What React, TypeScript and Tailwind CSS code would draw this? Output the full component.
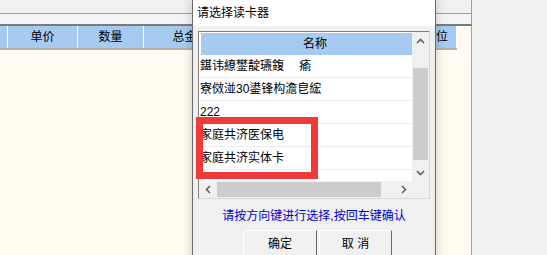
export default function App() {
  const up = (
    <svg width="9" height="6" viewBox="0 0 9 6"><polyline points="1,5 4.5,1.5 8,5" fill="none" stroke="#606060" strokeWidth="1.6" /></svg>
  );
  const down = (
    <svg width="9" height="6" viewBox="0 0 9 6"><polyline points="1,1 4.5,4.5 8,1" fill="none" stroke="#606060" strokeWidth="1.6" /></svg>
  );
  const left = (
    <svg width="6" height="9" viewBox="0 0 6 9"><polyline points="5,1 1.5,4.5 5,8" fill="none" stroke="#606060" strokeWidth="1.6" /></svg>
  );
  const right = (
    <svg width="6" height="9" viewBox="0 0 6 9"><polyline points="1,1 4.5,4.5 1,8" fill="none" stroke="#606060" strokeWidth="1.6" /></svg>
  );
  const rows = ["鍖讳繚鐢靛瓙鍑　 瘉", "寮傚湴30鍙锋构澹皀綋", "222", "家庭共济医保电", "家庭共济实体卡"];
  return (
    <div className="relative w-[547px] h-[255px] overflow-hidden bg-[#f0f0f0] text-[12px] text-black font-['Liberation_Sans','Noto_Sans_CJK_SC',sans-serif]">
      {/* background grid window */}
      <div className="w-[472px] h-full flex flex-col">
        <div className="h-[14px] border-b border-r border-[#a0a0a0] bg-[#f0f0f0]" />
        <div className="h-[10px] border-r border-[#a0a0a0] bg-[#f4f4f4]" />
        <div className="flex-1 flex flex-col border-t-2 border-t-[#7a7a7a] border-r border-r-[#a0a0a0] bg-[#fffbf0]">
          <div className="flex w-[457px] h-[24px] border-b-2 border-[#b0b0b0] bg-[#a6caf0] leading-[22px]">
            <div className="w-[8px] border-r border-white" />
            <div className="w-[70px] border-r border-white text-center">单价</div>
            <div className="w-[66px] border-r border-white text-center">数量</div>
            <div className="w-[94px] border-r border-white text-center">总金额</div>
            <div className="flex-1 border-r border-white" />
            <div className="w-[60px] border-r border-white text-right pr-[8px]">单位</div>
          </div>
        </div>
      </div>

      {/* dialog */}
      <div className="absolute left-[192px] top-0 w-[244px] h-[280px] flex flex-col border-x border-[#6b6b6b] bg-[#f0f0f0] shadow-[0_0_10px_rgba(0,0,0,0.2)]">
        <div className="h-[26px] bg-white pl-[4px] pt-[6px] leading-[14px]">请选择读卡器</div>
        <div className="mt-[5px] ml-[5px] w-[232px] h-[168px] flex border border-t-[#828282] border-l-[#828282] border-r-[#d8d8d8] border-b-[#d8d8d8] bg-white">
          <div className="flex-1 flex flex-col min-w-0">
            <div className="flex-1 overflow-hidden">
              <div className="h-[23px] pt-[1px] pl-[2px]">
                <div className="w-[228px] h-[22px] bg-[#a6caf0] text-center leading-[22px]">名称</div>
              </div>
              {rows.map((r) => (
                <div key={r} className="h-[23px] border-b border-[#ececec] pl-[1px] leading-[22px] whitespace-pre">{r}</div>
              ))}
            </div>
            <div className="h-[17px] flex bg-[#f0f0f0]">
              <div className="w-[17px] flex items-center justify-center">{left}</div>
              <div className="flex-1 flex items-center pl-[1px]">
                <div className="w-[164px] h-[15px] bg-[#cdcdcd]" />
              </div>
              <div className="w-[17px] flex items-center justify-center">{right}</div>
            </div>
          </div>
          <div className="w-[17px] flex flex-col bg-[#f0f0f0]">
            <div className="h-[17px] flex items-center justify-center">{up}</div>
            <div className="flex-1 flex flex-col items-center pt-[19px]">
              <div className="w-[15px] h-[92px] bg-[#cdcdcd]" />
            </div>
            <div className="h-[17px] flex items-center justify-center">{down}</div>
            <div className="h-[17px] bg-[#f0f0f0]" />
          </div>
        </div>
        <div className="mt-[10px] text-center leading-[14px] text-[#0000c8]">请按方向键进行选择,按回车键确认</div>
        <div className="mt-[7px] pl-[50px] flex gap-[2px]">
          <div className="w-[74px] h-[30px] border border-t-white border-l-white border-r-[#696969] border-b-[#696969] bg-[#f0f0f0] text-center pt-[6px] leading-[14px]">确定</div>
          <div className="w-[73px] h-[30px] border border-t-white border-l-white border-r-[#696969] border-b-[#696969] bg-[#f0f0f0] text-center pt-[6px] leading-[14px]">取 消</div>
        </div>
      </div>

      {/* red annotation */}
      <div className="absolute left-[196px] top-[117px] w-[122px] h-[62px] border-[7px] border-[#f03a3a]" />
    </div>
  );
}
